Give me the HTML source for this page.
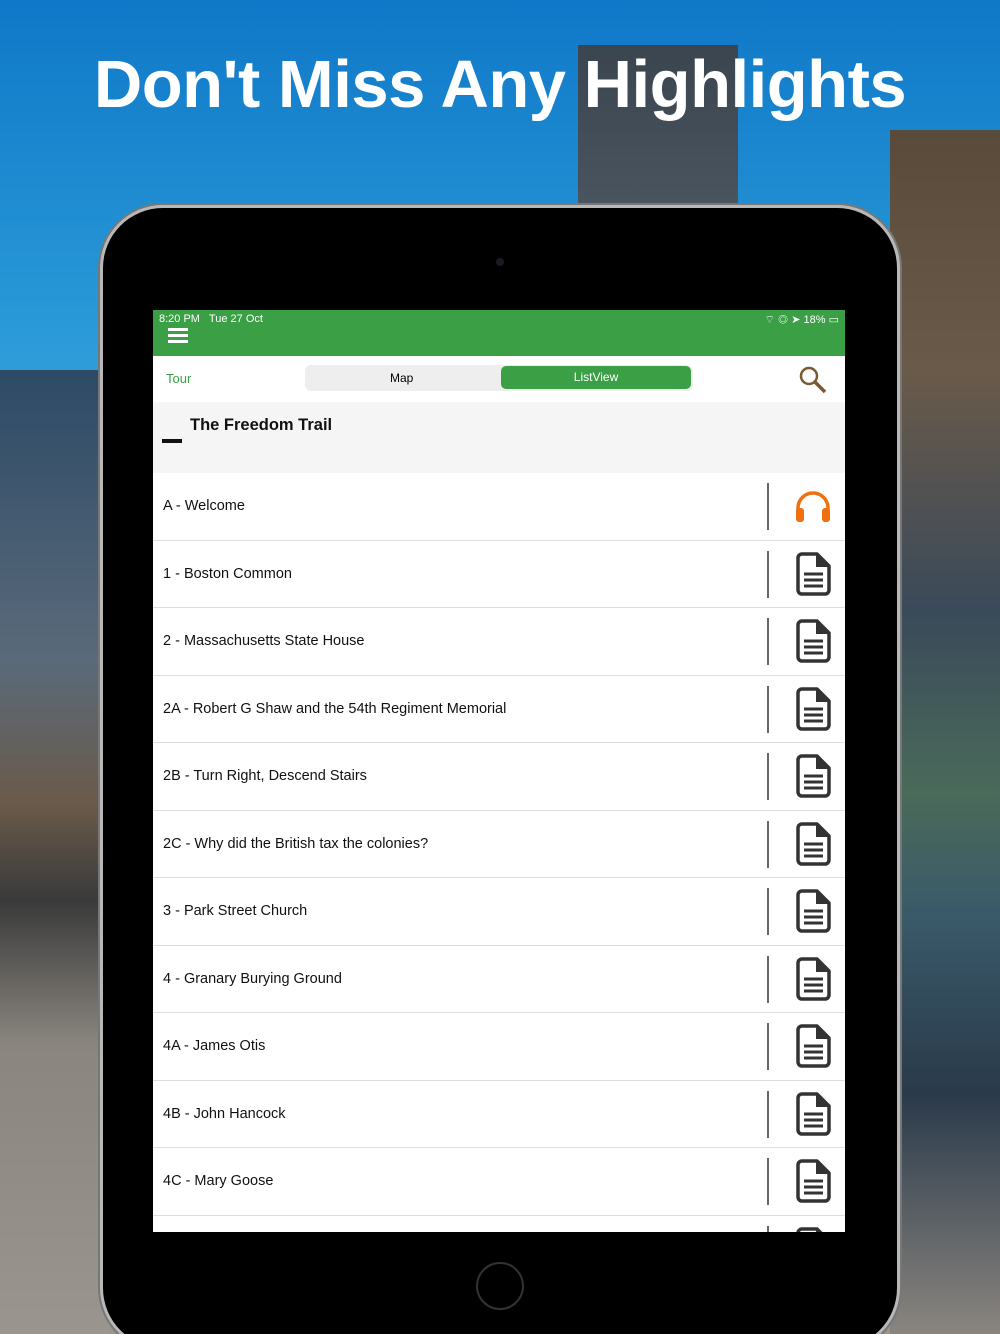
<!DOCTYPE html>
<html style="overflow:hidden;height:1334px"><head><style>
body{margin:0;width:1000px;height:1334px;overflow:hidden;position:relative;font-family:"Liberation Sans",sans-serif;
background:linear-gradient(180deg,#0f78c8 0%,#2a9ad8 25%,#4aa8d8 40%,#3b6f8a 55%,#6a6a70 70%,#8a8682 85%,#9a948c 100%);}
.wrap{position:absolute;left:0;top:0;width:1000px;height:1334px;overflow:hidden}
.bl{position:absolute;left:0;top:370px;width:110px;height:964px;background:linear-gradient(180deg,#2d4a66,#5a6a7a 30%,#6a5a4a 45%,#3a3a3a 55%,#8a857f 70%,#9a958e)}
.br{position:absolute;right:0;top:130px;width:110px;height:1204px;background:linear-gradient(180deg,#5a4a3a,#6a5a4a 20%,#3a4a5a 40%,#4a6a5a 55%,#3a5a6a 65%,#2a3a4a 80%,#8a857f)}
.bc{position:absolute;left:578px;top:45px;width:160px;height:170px;background:linear-gradient(180deg,#3a4550,#4a5560)}
h1{position:absolute;top:46px;left:0;width:1000px;text-align:center;margin:0;color:#fff;font-size:67px;font-weight:bold;letter-spacing:-0.5px}
.tab{position:absolute;left:103px;top:208px;width:794px;height:1140px;background:#000;border-radius:60px;box-shadow:0 0 0 3px #b8b8b8,0 0 0 5px #777}
.cam{position:absolute;left:496px;top:258px;width:8px;height:8px;border-radius:50%;background:#1a1a22}
.home{position:absolute;left:476px;top:1262px;width:44px;height:44px;border-radius:50%;border:2px solid #333}
.scr{position:absolute;left:153px;top:310px;width:692px;height:922px;background:#fff;overflow:hidden}
.sb{height:46px;background:#3a9f45;color:#fff;font-size:11px;position:relative}
.nav{height:46px;position:relative;background:#fff}
.hdr{height:71px;background:#f5f5f5;position:relative}
.row{height:66.5px;border-bottom:1px solid #ddd;position:relative;font-size:14.5px;color:#111}
.row span{position:absolute;left:10px;top:25px}
.row i{position:absolute;left:614px;top:10px;width:2px;height:47px;background:#666}
.row svg{position:absolute;left:640px;top:9px}
</style></head><body><div class="wrap">
<div class="bl"></div><div class="br"></div><div class="bc"></div>
<h1>Don't Miss Any Highlights</h1>
<div class="tab"></div><div class="cam"></div><div class="home"></div>
<div class="scr">
<div class="sb"><span style="position:absolute;left:6px;top:3px">8:20 PM&nbsp;&nbsp; Tue 27 Oct</span><span style="position:absolute;right:6px;top:3px">⌔ ◎ ➤ 18% ▭</span>
<div style="position:absolute;left:15px;top:18px;width:20px;height:3px;background:#fff;box-shadow:0 6px 0 #fff,0 12px 0 #fff"></div></div>
<div class="nav"><span style="position:absolute;left:13px;top:15px;color:#3a9f45;font-size:13px">Tour</span>
<div style="position:absolute;left:152px;top:9px;width:388px;height:26px;background:#eee;border-radius:6px"></div>
<span style="position:absolute;left:237px;top:15px;font-size:12px">Map</span>
<div style="position:absolute;left:348px;top:10px;width:190px;height:23px;background:#3a9f45;border-radius:5px;color:#fff;font-size:12px;text-align:center;line-height:23px">ListView</div>
<svg style="position:absolute;left:644px;top:8px" width="32" height="32"><circle cx="12" cy="12" r="8" fill="none" stroke="#7a5a30" stroke-width="2.5"/><line x1="18" y1="18" x2="28" y2="28" stroke="#7a5a30" stroke-width="3.5"/></svg></div>
<div class="hdr"><span style="position:absolute;left:37px;top:14px;font-size:16.5px;font-weight:bold;color:#111">The Freedom Trail</span><div style="position:absolute;left:9px;top:37px;width:20px;height:4px;background:#111"></div></div>
<div class="row"><span>A - Welcome</span><i></i><svg width="40" height="46" viewBox="0 0 40 46"><path d="M5 36V26a15 15 0 0 1 30 0v10" fill="none" stroke="#f07010" stroke-width="3.5"/><rect x="3" y="26" width="8" height="14" rx="3" fill="#f07010"/><rect x="29" y="26" width="8" height="14" rx="3" fill="#f07010"/></svg></div>
<script>
var t=["1 - Boston Common","2 - Massachusetts State House","2A - Robert G Shaw and the 54th Regiment Memorial","2B - Turn Right, Descend Stairs","2C - Why did the British tax the colonies?","3 - Park Street Church","4 - Granary Burying Ground","4A - James Otis","4B - John Hancock","4C - Mary Goose",""];
var ic='<svg width="40" height="46" viewBox="0 0 40 46"><path d="M9 4h15l12 12v24a4 4 0 0 1-4 4H9a4 4 0 0 1-4-4V8a4 4 0 0 1 4-4z" fill="none" stroke="#333" stroke-width="3.5" stroke-linejoin="round"/><path d="M23 4v13h13" fill="#333"/><path d="M11 24h19M11 30h19M11 36h19" stroke="#333" stroke-width="3"/></svg>';
t.forEach(function(s){document.write('<div class="row"><span>'+s+'</span><i></i>'+ic+'</div>')});
</script>
</div>
</div></body></html>
